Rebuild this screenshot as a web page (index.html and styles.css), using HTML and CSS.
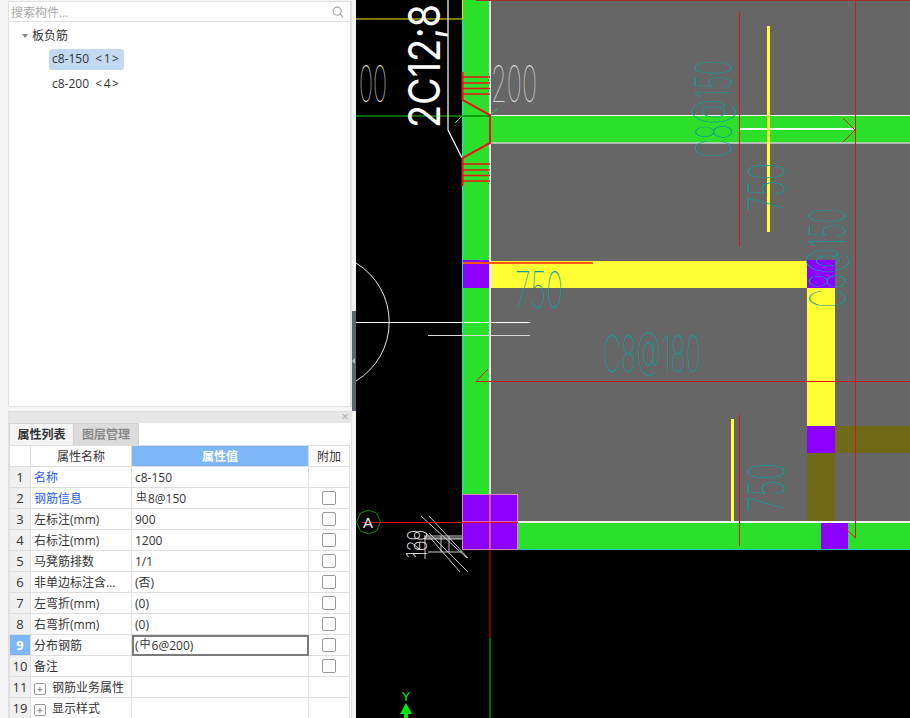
FILE: index.html
```html
<!DOCTYPE html>
<html lang="zh">
<head>
<meta charset="utf-8">
<title>板负筋</title>
<link rel="stylesheet" href="styles.css">
</head>
<body>
<div class="app">
  <aside class="side">
    <div class="tree-panel">
      <div class="search">
        <span class="search-text">搜索构件...</span>
        <svg class="search-icon" width="12" height="12" viewBox="0 0 12 12"><circle cx="5.2" cy="5.2" r="4" fill="none" stroke="#aaa" stroke-width="1.3"/><path d="M8 8l3 3" stroke="#aaa" stroke-width="1.3"/></svg>
      </div>
      <div class="tree">
        <div class="tree-root"><span class="caret"></span>板负筋</div>
        <div class="tree-item selected">c8-150 <span class="tag">&lt;1&gt;</span></div>
        <div class="tree-item">c8-200 <span class="tag">&lt;4&gt;</span></div>
      </div>
    </div>
    <div class="prop-panel">
      <div class="prop-title"><span class="close">×</span></div>
      <div class="tabs">
        <div class="tab active">属性列表</div>
        <div class="tab">图层管理</div>
      </div>
      <table class="props">
        <colgroup><col class="c-n"><col class="c-name"><col class="c-val"><col class="c-add"></colgroup>
        <tr class="head"><th></th><th>属性名称</th><th class="hl">属性值</th><th>附加</th></tr>
        <tr><td class="n">1</td><td class="blue">名称</td><td>c8-150</td><td></td></tr>
        <tr><td class="n">2</td><td class="blue">钢筋信息</td><td><span class="sym">虫</span>8@150</td><td class="ck"><i></i></td></tr>
        <tr><td class="n">3</td><td>左标注(mm)</td><td>900</td><td class="ck"><i></i></td></tr>
        <tr><td class="n">4</td><td>右标注(mm)</td><td>1200</td><td class="ck"><i></i></td></tr>
        <tr><td class="n">5</td><td>马凳筋排数</td><td>1/1</td><td class="ck"><i></i></td></tr>
        <tr><td class="n">6</td><td>非单边标注含...</td><td>(否)</td><td class="ck"><i></i></td></tr>
        <tr><td class="n">7</td><td>左弯折(mm)</td><td>(0)</td><td class="ck"><i></i></td></tr>
        <tr><td class="n">8</td><td>右弯折(mm)</td><td>(0)</td><td class="ck"><i></i></td></tr>
        <tr><td class="n cur">9</td><td>分布钢筋</td><td class="edit">(<span class="sym">中</span>6@200)</td><td class="ck"><i></i></td></tr>
        <tr><td class="n">10</td><td>备注</td><td></td><td class="ck"><i></i></td></tr>
        <tr><td class="n">11</td><td><span class="plus">+</span>钢筋业务属性</td><td></td><td></td></tr>
        <tr><td class="n">19</td><td><span class="plus">+</span>显示样式</td><td></td><td></td></tr>
      </table>
    </div>
  </aside>
  <div class="splitter"><span class="grip"></span></div>
  <main class="canvas">
    <svg class="cad" viewBox="356 0 554 718" width="554" height="718">
      <rect x="490" y="0" width="420" height="522" fill="#666"/>
      <rect x="462" y="0" width="28" height="549" fill="#2bdf2b"/>
      <rect x="490" y="115" width="420" height="28" fill="#2bdf2b"/>
      <rect x="462" y="522" width="448" height="27" fill="#2bdf2b"/>
      <rect x="490" y="261" width="317" height="27" fill="#ffff33"/>
      <rect x="807" y="288" width="28" height="138" fill="#ffff33"/>
      <rect x="835" y="426" width="75" height="27" fill="#6f6a17"/>
      <rect x="807" y="453" width="28" height="68" fill="#6f6a17"/>
      <rect x="463" y="260" width="27" height="28" fill="#8b00ff"/>
      <rect x="807" y="260" width="28" height="28" fill="#8b00ff"/>
      <rect x="807" y="426" width="28" height="27" fill="#8b00ff"/>
      <rect x="821" y="523" width="27" height="26" fill="#8b00ff"/>

      <g fill="none" stroke-width="1">
        <path d="M490 0V494" stroke="#fff" stroke-width="2"/>
        <path d="M490 115.500H910" stroke="#fff"/>
        <path d="M490 143H910" stroke="#d0d0d0" stroke-width="1.500"/>
        <path d="M518 522H910" stroke="#fff" stroke-width="2"/>
        <path d="M462.500 20V549" stroke="#28e0d8"/>
        <path d="M518 549.500H910" stroke="#20c8c0"/>
        <path d="M356 19H462" stroke="#7a7a00" stroke-width="2"/>
        <path d="M462.500 0V19" stroke="#e8e800"/>
        <path d="M356 116H490" stroke="#0a8a0a" stroke-width="1.500"/>
        <path d="M476 0.500H910" stroke="#a03030"/>
        <path d="M855.500 0V538L843 526" stroke="#d81818"/>
        <path d="M476 381.500H910M476 381.500L488 369" stroke="#d81818"/>
        <path d="M739.500 12V246M739.500 415V546" stroke="#d81818"/>
        <path d="M740 129H855" stroke="#fff" stroke-width="2"/>
        <path d="M843 118L855 130L843 142" stroke="#e02020"/>
        <path d="M768.500 26V232" stroke="#ffff33" stroke-width="3"/>
        <path d="M732.500 419V521" stroke="#ffff33" stroke-width="3"/>
        <path d="M463 263H593" stroke="#ff5a10" stroke-width="2"/>
        <path d="M356 263A69 69 0 0 1 356 381" stroke="#e8e8e8"/>
        <path d="M356 322.500H530" stroke="#fff"/>
        <path d="M428 335.500H530" stroke="#d8d8d8"/>

        <path d="M448 0V130L462 158" stroke="#fff" stroke-width="1.200"/>
        <path d="M455 123L462 116M490 115L497 109" stroke="#2bdf2b"/>
        <path d="M462.500 72V100L490 115V143L462.500 158V186" stroke="#f01010" stroke-width="2"/>
        <path d="M463 77H490M463 83H490M463 88.500H490M463 94H490M463 164H490M463 170H490M463 175.500H490M463 181H490" stroke="#f01010" stroke-width="1.600"/>

        <path d="M368 510L376 513L380 522L376 531L368 534L360 531L356 522L360 513Z" stroke="#0a8a0a" transform="translate(.5 0)"/>

        <g stroke="#c8c8c8">
          <path d="M421 516L467 558M429 516L468 558M426 533L460 572M429 533L468 572"/>
          <path d="M424 536H462M424 538H462M424 539H462M428 552H462"/>
          <path d="M441 536V552M449 536V552"/>
          <path d="M425 536V559"/>
        </g>
        <path d="M490 550V638" stroke="#a00000" stroke-width="1.500"/>
        <path d="M490 638V718" stroke="#008800" stroke-width="1.500"/>
      </g>

      <g fill="#8b00ff" stroke="#e080c0" stroke-width="1">
        <rect x="462.500" y="494.500" width="27.500" height="27.500"/>
        <rect x="490" y="494.500" width="27.500" height="27.500"/>
        <rect x="462.500" y="522" width="27.500" height="27.500"/>
        <rect x="490" y="522" width="27.500" height="27.500"/>
      </g>
      <path d="M362 522.500H518" fill="none" stroke="#e01010"/>
      <path d="M490 495V550" fill="none" stroke="#f06040"/>
      <path d="M406 703L412 714H408V718H404V714H400Z" fill="#00ee00"/>

      <text class="cad-big" transform="translate(440 128) rotate(-90)" textLength="124" lengthAdjust="spacingAndGlyphs">2C12;8</text>
      <text class="cad-line gray" x="359" y="102" textLength="28" lengthAdjust="spacingAndGlyphs">00</text>
      <text class="cad-line gray" x="491" y="102" textLength="46" lengthAdjust="spacingAndGlyphs">200</text>

      <text class="cad-line teal" transform="translate(732 158) rotate(-90)" textLength="98" lengthAdjust="spacingAndGlyphs">C8@150</text>
      <text class="cad-line teal" transform="translate(785 212) rotate(-90)" textLength="49" lengthAdjust="spacingAndGlyphs">750</text>
      <text class="cad-line teal" transform="translate(846 308) rotate(-90)" textLength="100" lengthAdjust="spacingAndGlyphs">C8@150</text>
      <text class="cad-line teal" x="515" y="308" textLength="48" lengthAdjust="spacingAndGlyphs">750</text>
      <text class="cad-line teal" x="603" y="372" textLength="98" lengthAdjust="spacingAndGlyphs">C8@180</text>
      <text class="cad-line teal" transform="translate(785 512) rotate(-90)" textLength="49" lengthAdjust="spacingAndGlyphs">750</text>
      <text class="cad-small" x="368" y="528">A</text>
      <text class="cad-tiny" transform="translate(420 558) rotate(-90)" textLength="28" lengthAdjust="spacingAndGlyphs">120</text>
      <text class="cad-tiny" transform="translate(427 558) rotate(-90)" textLength="28" lengthAdjust="spacingAndGlyphs">100</text>
      <text class="cad-y" x="406" y="701">Y</text>
    </svg>
  </main>
</div>
</body>
</html>
```
FILE: styles.css
```css
* { box-sizing: border-box; }
html, body { margin: 0; padding: 0; height: 100%; overflow: hidden; }
body { font-family: "Open Sans", "Noto Sans CJK SC", sans-serif; font-size: 12px; color: #333; background: #f5f5f5; }
.app { display: flex; width: 910px; height: 718px; }

.side { width: 352px; flex: none; padding: 1px 0 0 8px; display: flex; flex-direction: column; background: #f5f5f5; }
.tree-panel { width: 344px; height: 406px; flex: none; background: #fff; border: 1px solid #e0e0e0; border-right-width: 2px; display: flex; flex-direction: column; }
.search { height: 20px; flex: none; display: flex; align-items: center; justify-content: space-between; padding: 0 6px 0 2px; border-bottom: 1px solid #e0e0e0; }
.search-text { color: #a8a8a8; font-size: 12px; }
.tree { flex: 1; padding: 2px 0 0 13px; }
.tree-root { height: 23px; line-height: 22px; display: flex; align-items: center; }
.caret { width: 0; height: 0; border: 3.5px solid transparent; border-top: 4px solid #888; border-bottom: 0; margin-right: 4px; }
.tree-item { width: 75px; height: 21px; line-height: 20px; margin: 2px 0 4px 27px; padding-left: 3px; white-space: pre; border-radius: 3px; font-size: 12px; }
.tree-item.selected { background: #c3d9f1; }
.tag { letter-spacing: 1.6px; margin-left: 3px; }

.prop-panel { width: 344px; margin-top: 4px; flex: 1; min-height: 0; background: #fff; border: 1px solid #e0e0e0; border-bottom: 0; overflow: hidden; }
.prop-title { height: 11px; background: #e6e6e6; position: relative; }
.close { position: absolute; right: 2px; top: -3px; color: #aaa; font-size: 13px; line-height: 14px; }
.tabs { display: flex; height: 22px; background: #fff; }
.tab { width: 65px; height: 22px; line-height: 21px; text-align: center; font-weight: 700; background: #dcdcdc; color: #888; border: 1px solid #d4d4d4; border-left: 0; border-bottom: 0; }
.tab.active { background: #f4f4f4; color: #333; border-left: 1px solid #d4d4d4; }

.props { border-collapse: collapse; table-layout: fixed; width: 340px; }
.c-n { width: 21px; }
.c-name { width: 101px; }
.c-val { width: 177px; }
.c-add { width: 41px; }
.props tr { height: 21px; }
.props th, .props td { height: 21px; padding: 1px 0 0 3px; border: 1px solid #dedede; font-weight: 400; white-space: nowrap; overflow: hidden; line-height: 18px; }
.props th { padding: 1px 0 0; text-align: center; }
.props th.hl { background: #7eb7f7; color: #fff; font-weight: 700; }
.props td.n { padding: 0; text-align: center; background: #f0f0f0; font-size: 13px; }
.props td.n.cur { background: #7eb7f7; color: #fff; font-weight: 700; }
.props td.blue { color: #2a5ee8; }
.props td.edit { outline: 2px solid #7a7a7a; outline-offset: -2px; }
.sym { font-size: 11px; line-height: 0; vertical-align: 2px; margin: 0 1px 0 1px; }
.ck { text-align: center; padding: 0 !important; }
.ck i { display: block; width: 14px; height: 14px; margin: 0 auto; border: 1px solid #999; border-radius: 2px; background: #fff; }
.plus { display: inline-block; width: 12px; height: 12px; line-height: 9px; text-align: center; border: 1px solid #999; border-radius: 2px; margin-right: 6px; font-size: 11px; color: #555; vertical-align: -1px; }

.splitter { width: 4px; flex: none; position: relative; background: #f5f5f5; }
.grip { position: absolute; left: 0; top: 311px; width: 4px; height: 100px; background: #5b6672; }
.grip::after { content: ""; position: absolute; left: 0; top: 47px; border: 3px solid transparent; border-left: 0; border-right: 3px solid #b4bac0; }
.canvas { flex: 1; background: #000; overflow: hidden; min-width: 0; }
.cad { display: block; }

.cad-line { font-family: "Inter", sans-serif; font-weight: 100; font-size: 50px; }
.teal { fill: #0f9a9a; }
.gray { fill: #d8d8d8; }
.cad-big { font-family: "Inter", sans-serif; font-weight: 400; font-size: 44px; fill: #fff; }
.cad-small { font-family: "Liberation Sans", sans-serif; font-size: 15px; fill: #f0f0f0; text-anchor: middle; }
.cad-tiny { font-family: "Inter", sans-serif; font-weight: 200; font-size: 18px; fill: #f0f0f0; }
.cad-y { font-family: "Liberation Sans", sans-serif; font-size: 13px; fill: #00ee00; text-anchor: middle; }
```
